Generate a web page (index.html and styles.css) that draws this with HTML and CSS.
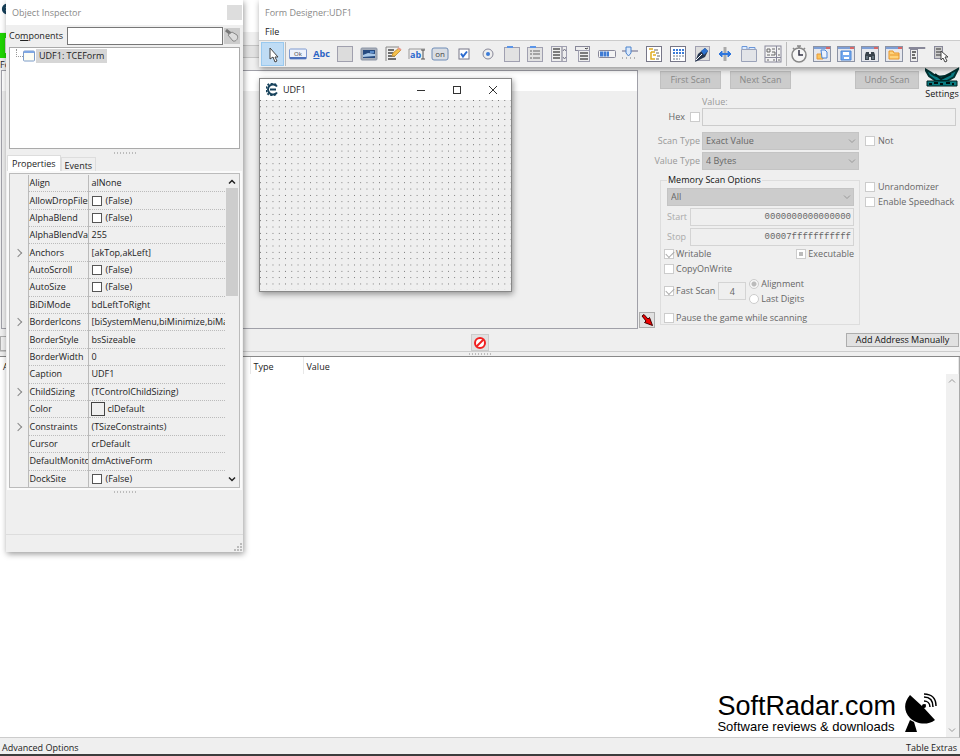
FILE: index.html
```html
<!DOCTYPE html>
<html lang="en">
<head>
    <meta charset="UTF-8">
    <meta name="viewport" content="width=device-width, initial-scale=1.0">
    <title>Form Designer:UDF1</title>
    <link rel="stylesheet" href="styles.css">
</head>
<body>
    <main class="app">
        <div class="app-title">
            <svg width="12" height="12" viewBox="0 0 12 12"><path d="M10 3A4 4 0 1 0 10 9M3 6h6" fill="none" stroke="#17425c" stroke-width="3"/></svg>
        </div>
        <div class="process-row">
            <button class="process-button" aria-label="Open process"></button>
            <div class="progress"></div>
        </div>

        <section class="scanner">
            <div class="found">
                <div class="found-label">Found: 0</div>
                <div class="found-list"><div class="found-header"></div></div>
            </div>

            <div class="arrow-column">
                <button class="small-button" aria-label="Copy to address list">
                    <svg width="12" height="12" viewBox="0 0 12 12"><path d="M1 2l2-1.500L7 5l1.500-1.500L11.500 11.500 3.500 8.500 5 7z" fill="#f00000" stroke="#400" stroke-width="1"/></svg>
                </button>
            </div>

            <form class="scan-form">
                <div class="scan-top">
                    <div>
                        <div class="scan-buttons">
                            <button type="button" disabled>First Scan</button>
                            <button type="button" disabled>Next Scan</button>
                            <button type="button" class="undo" disabled>Undo Scan</button>
                        </div>
                        <label class="value-label" for="scan-value">Value:</label>
                    </div>
                    <button type="button" class="settings">
                        <svg width="34" height="24" viewBox="0 0 34 24"><path d="M0 6l5 3c5 5 13 6 19 2l9-5-4 8-7 4H11l-7-5z" fill="#087d85" stroke="#033" stroke-width="2"/><path d="M10 11l6 5 10-5" fill="none" stroke="#022" stroke-width="2"/><path d="M2 18h30v5H2z" fill="#0a7c82" stroke="#022"/><path d="M4 21h3m2-1h4m2 1h3m3-1h4m2 1h2" stroke="#011" stroke-width="2"/></svg>
                        Settings
                    </button>
                </div>

                <div class="hex-row">
                    <label class="check hex">Hex <input type="checkbox" disabled></label>
                    <input type="text" id="scan-value" disabled>
                </div>

                <div class="scan-grid">
                    <label for="scan-type">Scan Type</label>
                    <div class="select">
                        <select id="scan-type" disabled><option>Exact Value</option></select>
                        <svg class="chevron" viewBox="0 0 8 8"><path d="M1 2.500l3 3 3-3" fill="none" stroke="currentColor"/></svg>
                    </div>
                    <label class="check"><input type="checkbox" disabled>Not</label>
                    <label for="value-type">Value Type</label>
                    <div class="select">
                        <select id="value-type" disabled><option>4 Bytes</option></select>
                        <svg class="chevron" viewBox="0 0 8 8"><path d="M1 2.500l3 3 3-3" fill="none" stroke="currentColor"/></svg>
                    </div>
                </div>

                <div class="options-row">
                    <fieldset class="memory">
                        <legend>Memory Scan Options</legend>
                        <div class="select">
                            <select aria-label="Memory region" disabled><option>All</option></select>
                            <svg class="chevron" viewBox="0 0 8 8"><path d="M1 2.500l3 3 3-3" fill="none" stroke="currentColor"/></svg>
                        </div>
                        <div class="range">
                            <label for="start">Start</label>
                            <input type="text" id="start" value="0000000000000000" disabled>
                            <label for="stop">Stop</label>
                            <input type="text" id="stop" value="00007fffffffffff" disabled>
                        </div>
                        <div class="flags">
                            <label class="check"><input type="checkbox" checked disabled>Writable</label>
                            <label class="check"><input type="checkbox" class="mixed" disabled>Executable</label>
                        </div>
                        <label class="check"><input type="checkbox" disabled>CopyOnWrite</label>
                        <div class="fast">
                            <label class="check"><input type="checkbox" checked disabled>Fast Scan</label>
                            <input type="text" aria-label="Alignment size" value="4" disabled>
                            <div>
                                <label class="check"><input type="radio" name="align" checked disabled>Alignment</label>
                                <label class="check"><input type="radio" name="align" disabled>Last Digits</label>
                            </div>
                        </div>
                        <label class="check pause"><input type="checkbox" disabled>Pause the game while scanning</label>
                    </fieldset>
                    <div class="extras">
                        <label class="check"><input type="checkbox" disabled>Unrandomizer</label>
                        <label class="check"><input type="checkbox" disabled>Enable Speedhack</label>
                    </div>
                </div>
            </form>
        </section>

        <div class="middle-bar">
            <button class="memory-view" aria-label="Memory View"></button>
            <button class="small-button stop" aria-label="Clear list">
                <svg width="14" height="14" viewBox="0 0 14 14"><circle cx="7" cy="7" r="5" fill="#fff" stroke="#f02020" stroke-width="2"/><path d="M10.500 3.500l-7 7" stroke="#f02020" stroke-width="2"/></svg>
            </button>
            <button class="add-address">Add Address Manually</button>
        </div>
        <div class="splitter"><span class="grip"></span></div>

        <section class="address-list">
            <table>
                <thead>
                    <tr><th class="c-active">Active</th><th class="c-desc">Description</th><th class="c-addr">Address</th><th class="c-type">Type</th><th>Value</th></tr>
                </thead>
            </table>
            <div class="list-scroll">
                <svg viewBox="0 0 8 8"><path d="M1 5.500l3-3 3 3" fill="none" stroke="currentColor"/></svg>
                <svg viewBox="0 0 8 8"><path d="M1 2.500l3 3 3-3" fill="none" stroke="currentColor"/></svg>
            </div>
        </section>

        <footer class="app-footer">
            <span>Advanced Options</span>
            <span>Table Extras</span>
        </footer>
    </main>

    <section class="window designer">
        <div class="title">Form Designer:UDF1</div>
        <div class="menu">File</div>
        <div class="toolbar">
            <button class="selected" aria-label="Select"><svg viewBox="0 0 18 18"><path d="M6 3v11l3-2 2 5 2-1-2-4h3z" fill="#fff" stroke="#444"/></svg></button>
            <div class="tools">
                <button aria-label="Button"><svg viewBox="0 0 18 18"><rect x="0.500" y="4" width="17" height="10" rx="1" fill="#eef2fb" stroke="#7f9ad0"/><path d="M1 13h16" stroke="#4c70bb" stroke-width="2"/><text x="9" y="11" font-size="6" text-anchor="middle" fill="#444">Ok</text></svg></button>
                <button class="abc" aria-label="Label"><u>A</u>bc</button>
                <button aria-label="Panel"><svg viewBox="0 0 18 18"><rect x="1.500" y="1.500" width="15" height="15" fill="#dcdcdc" stroke="#a0a0ae"/></svg></button>
                <button aria-label="Image"><svg viewBox="0 0 18 18"><rect x="1" y="3" width="16" height="12" rx="1" fill="#a5acb8" stroke="#8d96a6"/><rect x="3" y="5" width="12" height="8" fill="#264a80"/><path d="M3 10l5-2 7 1v2l-12 1z" fill="#a9c8e8"/><path d="M10 6h4v2h-4z" fill="#5b8cca"/></svg></button>
                <button aria-label="Memo"><svg viewBox="0 0 18 18"><path d="M2 16V2h13" fill="none" stroke="#888"/><path d="M4 5h6M4 8h5M4 11h7M4 14h8" stroke="#444" stroke-width="1.500"/><path d="M8 11l1-3 6-5 2 2-6 6z" fill="#f5c14b" stroke="#c8983c"/><path d="M14 3l3 2" stroke="#e89a8c" stroke-width="2"/></svg></button>
                <button aria-label="Edit"><svg viewBox="0 0 18 18"><path d="M1 14V4h16" fill="none" stroke="#999"/><text x="2" y="13" font-size="9" font-weight="700" fill="#2b6bd0">ab</text><path d="M13 5h4M15 5v9M13 14h4" stroke="#555"/></svg></button>
                <button aria-label="Toggle"><svg viewBox="0 0 18 18"><rect x="1" y="3" width="16" height="12" rx="2" fill="#d9dde3" stroke="#6e8cb6"/><text x="9" y="12" font-size="8" text-anchor="middle" fill="#444">on</text></svg></button>
                <button aria-label="Check box"><svg viewBox="0 0 18 18"><rect x="4" y="4" width="10" height="10" fill="#fff" stroke="#778"/><path d="M6 8.500l2 3 4-5" fill="none" stroke="#2b6bd0" stroke-width="2"/></svg></button>
                <button aria-label="Radio button"><svg viewBox="0 0 18 18"><circle cx="9" cy="9" r="5" fill="#eee" stroke="#889"/><circle cx="9" cy="9" r="2" fill="#3a7bd8"/></svg></button>
                <button aria-label="Group box"><svg viewBox="0 0 18 18"><rect x="1.500" y="2.500" width="15" height="14" fill="#e2e2e2" stroke="#a0a0b0"/><path d="M4 2h6" stroke="#5b95e8" stroke-width="2"/></svg></button>
                <button aria-label="Radio group"><svg viewBox="0 0 18 18"><rect x="1.500" y="2.500" width="15" height="14" fill="#e2e2e2" stroke="#a0a0b0"/><path d="M4 2h6" stroke="#5b95e8" stroke-width="2"/><path d="M4 6h2M7 6h7M4 9h2M7 9h7M4 13h2M7 13h7" stroke="#666"/></svg></button>
                <button aria-label="List box"><svg viewBox="0 0 18 18"><rect x="1.500" y="1.500" width="15" height="15" fill="#eee" stroke="#a0a0b0"/><path d="M3 4h7M3 7h7M3 10h7M3 13h7" stroke="#555" stroke-width="1.500"/><path d="M12 2v14M13 6l1.500-2L16 6M13 12l1.500 2 1.500-2" fill="none" stroke="#778"/></svg></button>
                <button aria-label="Combo box"><svg viewBox="0 0 18 18"><rect x="1.500" y="1.500" width="14" height="4" fill="#eee" stroke="#889"/><path d="M11 3l1 1 2-1" fill="none" stroke="#444"/><rect x="4.500" y="5.500" width="11" height="11" fill="#eee" stroke="#a0a0b0"/><path d="M6 8h8M6 11h8M6 14h8" stroke="#555" stroke-width="1.500"/></svg></button>
                <button aria-label="Progress bar"><svg viewBox="0 0 18 18"><rect x="0.500" y="5.500" width="17" height="7" rx="1" fill="#f4f4f4" stroke="#889"/><path d="M2 9h9" stroke="#3f7bd4" stroke-width="5" stroke-dasharray="3 .5"/></svg></button>
                <button aria-label="Track bar"><svg viewBox="0 0 18 18"><path d="M1 6h16" stroke="#aab" stroke-width="2"/><path d="M5 2h5v6l-2.500 3L5 8z" fill="#d9e8fb" stroke="#4b82cc"/><path d="M1 13h16" stroke="#777" stroke-dasharray="1 3"/></svg></button>
                <button aria-label="Tree view"><svg viewBox="0 0 18 18"><rect x="1.500" y="1.500" width="15" height="15" fill="#fff" stroke="#778"/><path d="M4 4h4M6 7h4M8 10h3M6 7v7h4" stroke="#e0ad22" stroke-width="1.500" fill="none"/><path d="M9 5h4M11 8h3M12 11h3M11 14h3" stroke="#666"/></svg></button>
                <button aria-label="List view"><svg viewBox="0 0 18 18"><rect x="1.500" y="1.500" width="15" height="15" fill="#fff" stroke="#778"/><path d="M4 5h11M4 8h11" stroke="#3a7bd8" stroke-width="2" stroke-dasharray="2 1"/><path d="M4 11h11M4 14h7" stroke="#678" stroke-dasharray="2 1"/></svg></button>
                <button aria-label="Paint box"><svg viewBox="0 0 18 18"><rect x="2.500" y="1.500" width="14" height="14" fill="#ddd" stroke="#a0a0b0"/><path d="M2 17l3-8 7-6 3 3-3 6-6 3z" fill="#26364f"/><path d="M8 6l4-3 3 3-4 4z" fill="#2c71cf"/><path d="M3 15l6-6" stroke="#fff"/></svg></button>
                <button aria-label="Splitter"><svg viewBox="0 0 18 18"><path d="M9 2v14" stroke="#aaa" stroke-width="3"/><path d="M3 9h12" stroke="#2f76dd" stroke-width="2"/><path d="M6 6L3 9l3 3zM12 6l3 3-3 3z" fill="#2f76dd" stroke="#2f76dd"/></svg></button>
                <button aria-label="Page control"><svg viewBox="0 0 18 18"><path d="M1.500 4.500h15v12h-15z" fill="#e2e4e8" stroke="#9aa2b8"/><path d="M2 4V1.500h5V4M9 4V2.500h6V4" fill="#dcebff" stroke="#6b96d8"/></svg></button>
                <button aria-label="Scroll box"><svg viewBox="0 0 18 18"><rect x="1" y="1" width="16" height="16" fill="#f3f3f3" stroke="#889"/><path d="M12.500 1v16M1 12.500h16" stroke="#889"/><path d="M3 4h3v3H3zM8 4h3M8 7h3v3H7M3 10h3M14 4h2M14 10h2M3 15h2M9 15h2M14 15h2" fill="none" stroke="#666"/></svg></button>
            </div>
            <div class="tools tools-dialogs">
                <button aria-label="Timer"><svg viewBox="0 0 18 18"><path d="M7 1h4M9 1v2M3 3l2 2M15 3l-2 2" stroke="#888" stroke-width="1.500"/><circle cx="9" cy="10" r="7" fill="#f6f6f6" stroke="#888" stroke-width="1.500"/><path d="M9 5v5h4" fill="none" stroke="#334" stroke-width="1.500"/></svg></button>
                <button aria-label="Open dialog"><svg viewBox="0 0 18 18"><rect x="0.500" y="1.500" width="17" height="15" fill="#e6e8ee" stroke="#8c93a4"/><path d="M1 3h12" stroke="#7e9fd6" stroke-width="2"/><path d="M13 3h4" stroke="#d86868" stroke-width="2"/><path d="M4 9h6v5H4z" fill="#fbc55e" stroke="#e89a3a"/><path d="M8 5h4l2 2v6H9z" fill="#e9f1ff" stroke="#4a83d4"/></svg></button>
                <button aria-label="Save dialog"><svg viewBox="0 0 18 18"><rect x="0.500" y="1.500" width="17" height="15" fill="#e6e8ee" stroke="#8c93a4"/><path d="M1 3h12" stroke="#7e9fd6" stroke-width="2"/><path d="M13 3h4" stroke="#d86868" stroke-width="2"/><path d="M4 6h10v9H4z" fill="#75aaf0" stroke="#4c86d4"/><path d="M6 7h6v3H6zM7 12h5v2H7z" fill="#fff"/></svg></button>
                <button aria-label="Find dialog"><svg viewBox="0 0 18 18"><rect x="0.500" y="1.500" width="17" height="15" fill="#e6e8ee" stroke="#8c93a4"/><path d="M1 3h12" stroke="#7e9fd6" stroke-width="2"/><path d="M13 3h4" stroke="#d86868" stroke-width="2"/><path d="M5 7h3v2h2V7h3l1 3v5h-4v-3H8v3H4v-5z" fill="#39434d"/><path d="M6 11v3M12 11v3" stroke="#8fa0ae"/></svg></button>
                <button aria-label="Folder dialog"><svg viewBox="0 0 18 18"><rect x="0.500" y="1.500" width="17" height="15" fill="#e6e8ee" stroke="#8c93a4"/><path d="M1 3h12" stroke="#7e9fd6" stroke-width="2"/><path d="M13 3h4" stroke="#d86868" stroke-width="2"/><path d="M4 14V6h4l1 2h5v6z" fill="#ffd37a" stroke="#e8952a"/><path d="M5 10h9" stroke="#e8952a"/></svg></button>
                <button aria-label="Main menu"><svg viewBox="0 0 18 18"><path d="M1 2.500h16v1H1z" fill="#ccc" stroke="#889"/><rect x="2.500" y="4.500" width="7" height="12" fill="#eee" stroke="#889"/><path d="M4 7h4M4 10h3M4 13h4" stroke="#444" stroke-width="1.500"/></svg></button>
                <button aria-label="Popup menu"><svg viewBox="0 0 18 18"><rect x="2.500" y="1.500" width="8" height="12" fill="#ccc" stroke="#889"/><path d="M4 4h5M4 7h5M4 10h5" stroke="#666" stroke-width="1.500"/><path d="M9 6v9l2-2 2 4 2-1-2-4h3z" fill="#fff" stroke="#444"/></svg></button>
            </div>
        </div>
    </section>

    <section class="window form-window">
        <div class="form-title">
            <svg width="13" height="13" viewBox="0 0 13 13"><path d="M11 3.500A5 5 0 1 0 11 9.500" fill="none" stroke="#17425c" stroke-width="2"/><path d="M10 2A6 6 0 1 0 10 11" fill="none" stroke="#17425c" stroke-width="2" stroke-dasharray="2 1.500"/><path d="M4 6.500h6" stroke="#17425c" stroke-width="2"/></svg>
            <span>UDF1</span>
            <button aria-label="Minimize"><svg viewBox="0 0 10 10"><path d="M1 5.500h8" stroke="#333"/></svg></button>
            <button aria-label="Maximize"><svg viewBox="0 0 10 10"><rect x="1.500" y="1.500" width="7" height="7" fill="none" stroke="#333"/></svg></button>
            <button aria-label="Close"><svg viewBox="0 0 10 10"><path d="M1 1l8 8M9 1l-8 8" stroke="#333"/></svg></button>
        </div>
        <div class="form-canvas"></div>
    </section>

    <section class="window inspector">
        <div class="title">Object Inspector<button aria-label="Close"></button></div>
        <div class="components">
            <label for="filter">Co<u>m</u>ponents</label>
            <input type="text" id="filter">
            <button aria-label="Clear filter"><svg width="14" height="14" viewBox="0 0 14 14"><path d="M1 1l5 4" stroke="#777" stroke-width="3"/><path d="M3 6l4-3 5 3c2 3-1 7-4 6z" fill="#ddd" stroke="#888"/></svg></button>
        </div>
        <div class="tree">
            <span class="tree-line"></span>
            <svg width="12" height="12" viewBox="0 0 12 12"><rect x="0.500" y="1" width="11" height="10" rx="1" fill="#fdfdf4" stroke="#7c9cc9"/><path d="M1 2h10" stroke="#7fa7e4" stroke-width="2"/></svg>
            <span class="tree-item">UDF1: TCEForm</span>
        </div>
        <span class="grip"></span>
        <div class="tabs">
            <button class="active">Properties</button>
            <button>Events</button>
        </div>
        <div class="properties">
            <table>
                <tbody>
                    <tr><td></td><td>Align</td><td>alNone</td></tr>
                    <tr><td></td><td>AllowDropFiles</td><td><label><input type="checkbox">(False)</label></td></tr>
                    <tr><td></td><td>AlphaBlend</td><td><label><input type="checkbox">(False)</label></td></tr>
                    <tr><td></td><td>AlphaBlendValue</td><td>255</td></tr>
                    <tr class="expandable"><td></td><td>Anchors</td><td>[akTop,akLeft]</td></tr>
                    <tr><td></td><td>AutoScroll</td><td><label><input type="checkbox">(False)</label></td></tr>
                    <tr><td></td><td>AutoSize</td><td><label><input type="checkbox">(False)</label></td></tr>
                    <tr><td></td><td>BiDiMode</td><td>bdLeftToRight</td></tr>
                    <tr class="expandable"><td></td><td>BorderIcons</td><td>[biSystemMenu,biMinimize,biMaximize]</td></tr>
                    <tr><td></td><td>BorderStyle</td><td>bsSizeable</td></tr>
                    <tr><td></td><td>BorderWidth</td><td>0</td></tr>
                    <tr><td></td><td>Caption</td><td>UDF1</td></tr>
                    <tr class="expandable"><td></td><td>ChildSizing</td><td>(TControlChildSizing)</td></tr>
                    <tr><td></td><td>Color</td><td><span class="swatch"></span>clDefault</td></tr>
                    <tr class="expandable"><td></td><td>Constraints</td><td>(TSizeConstraints)</td></tr>
                    <tr><td></td><td>Cursor</td><td>crDefault</td></tr>
                    <tr><td></td><td>DefaultMonitor</td><td>dmActiveForm</td></tr>
                    <tr><td></td><td>DockSite</td><td><label><input type="checkbox">(False)</label></td></tr>
                </tbody>
            </table>
            <div class="prop-scroll">
                <svg viewBox="0 0 8 8"><path d="M1 5.500l3-3 3 3" fill="none" stroke="currentColor" stroke-width="1.500"/></svg>
                <div class="thumb"></div>
                <svg viewBox="0 0 8 8"><path d="M1 2.500l3 3 3-3" fill="none" stroke="currentColor" stroke-width="1.500"/></svg>
            </div>
        </div>
        <span class="grip"></span>
        <div class="hint"></div>
        <div class="status"><svg width="8" height="8" viewBox="0 0 8 8"><path d="M6 0h2v2H6zM3 3h2v2H3zM6 3h2v2H6zM0 6h2v2H0zM3 6h2v2H3zM6 6h2v2H6z" fill="#bbb"/></svg></div>
    </section>

    <div class="watermark">
        <div>
            <div class="brand">SoftRadar.com</div>
            <div class="tagline">Software reviews &amp; downloads</div>
        </div>
        <svg width="34" height="42" viewBox="0 0 34 42"><path d="M6 3C-1 11 0 20 6 26s17 8 25 2L20 16l2-4-4 2z"/><path d="M6 28l4 2 3 10H1z"/><circle cx="20" cy="14" r="2"/><path d="M20 9c3 0 6 2 6 6M20 5c6 0 9 4 9 10M20 2c8 0 12 5 12 12" fill="none" stroke="#000" stroke-width="1.500"/></svg>
    </div>
</body>
</html>
```

FILE: styles.css
```css
* {
    box-sizing: border-box;
}

body {
    margin: 0;
    font-family: "Open Sans", "Noto Sans", sans-serif;
    font-size: 9px;
    line-height: 14px;
    color: #222;
    background: #efefef;
    overflow: hidden;
}

button,
input,
select {
    font: inherit;
    color: inherit;
    margin: 0;
    padding: 0;
    border: none;
    border-radius: 0;
    background: none;
}

button {
    display: flex;
    align-items: center;
    justify-content: center;
}

svg {
    display: block;
    flex: none;
}

/* main window */
.app {
    display: flex;
    flex-direction: column;
    height: 100vh;
    border-bottom: 2px solid #3c3c3c;
}

.app-title {
    height: 32px;
    padding-top: 3px;
    background: #fff;
}

.process-row {
    display: flex;
    align-items: flex-end;
    height: 28px;
    padding-bottom: 2px;
}

.process-button {
    width: 30px;
    height: 25px;
    border: 5px solid #1fd400;
    background: #ddd;
}

.progress {
    flex: 1;
    height: 13px;
    margin-left: 8px;
    background: #e2e2e2;
    border: 1px solid #c4c4c4;
}

.scanner {
    display: grid;
    grid-template-columns: 1fr 18px 304px;
    height: 269px;
}

.found {
    display: flex;
    flex-direction: column;
}

.found-label {
    height: 10px;
    line-height: 10px;
}

.found-list {
    flex: 1;
    margin-left: 1px;
    border: 1px solid #a0a0a8;
}

.found-header {
    height: 20px;
    background: #fff;
}

.arrow-column {
    display: flex;
    align-items: flex-end;
    padding: 0 0 1px 1px;
}

.small-button {
    width: 16px;
    height: 16px;
    border: 1px solid #adadad;
    background: #e1e1e1;
}

.scan-form {
    display: flex;
    flex-direction: column;
    padding-left: 4px;
    color: #666;
}

.scan-top {
    display: flex;
    justify-content: space-between;
    height: 48px;
    padding-right: 1px;
}

.scan-buttons {
    display: flex;
    gap: 9px;
    padding-top: 11px;
}

.scan-buttons button {
    width: 61px;
    height: 18px;
    color: #888;
    background: #ccc;
    border: 1px solid #c0c0c0;
}

.scan-buttons .undo {
    width: 64px;
    margin-left: 55px;
}

.value-label {
    display: block;
    margin-left: 42px;
    line-height: 26px;
    color: #999;
}

.settings {
    flex-direction: column;
    justify-content: flex-end;
    padding-bottom: 7px;
    color: #111;
}

.hex-row {
    display: flex;
    justify-content: space-between;
    padding-right: 4px;
}

.hex-row input[type="text"] {
    width: 254px;
    height: 18px;
    border: 1px solid #ccc;
}

.check {
    display: flex;
    align-items: center;
    gap: 3px;
    height: 15px;
    white-space: nowrap;
}

.check.hex {
    width: 36px;
    height: 18px;
    margin-left: 4px;
    gap: 5px;
    justify-content: flex-end;
}

input[type="checkbox"],
input[type="radio"] {
    appearance: none;
    flex: none;
    width: 10px;
    height: 10px;
    background: #fff;
    border: 1px solid #ccc;
}

input[type="radio"] {
    border-radius: 50%;
}

input[type="radio"]:checked {
    background: radial-gradient(circle, #bbb 2px, #f6f6f6 3px);
}

input[type="checkbox"]:checked::before {
    content: "";
    display: block;
    width: 7px;
    height: 4px;
    margin: 1px 0 0 1px;
    border: solid #aaa;
    border-width: 0 0 1px 1px;
    transform: rotate(-45deg);
}

input.mixed {
    background: #bbb;
    box-shadow: inset 0 0 0 2px #fff;
}

.scan-grid {
    display: grid;
    grid-template-columns: 40px 157px 1fr;
    column-gap: 2px;
    row-gap: 2px;
    margin-top: 6px;
    align-items: center;
}

.scan-grid > .check {
    padding-left: 4px;
}

.scan-grid > label:not(.check) {
    justify-self: end;
    white-space: nowrap;
    color: #999;
}

.select {
    position: relative;
}

.select select {
    appearance: none;
    display: block;
    width: 100%;
    height: 18px;
    padding-left: 3px;
    color: #666;
    opacity: 1;
    background: #ccc;
    border: 1px solid #c4c4c4;
}

.chevron {
    position: absolute;
    right: 3px;
    top: 5px;
    width: 8px;
    height: 8px;
    color: #999;
}

.options-row {
    display: flex;
    gap: 5px;
    margin-top: 3px;
}

.memory {
    flex: none;
    width: 200px;
    height: 152px;
    margin: 0;
    padding: 1px 5px 0 3px;
    border: 1px solid #ddd;
}

.memory .check {
    gap: 2px;
}

.memory legend {
    margin-left: 3px;
    padding: 0 1px;
    color: #111;
}

.memory > .select {
    margin-left: 3px;
}

.range {
    display: grid;
    grid-template-columns: 23px 1fr;
    row-gap: 2px;
    margin: 2px 0 0 3px;
    align-items: center;
    color: #aaa;
}

.range input {
    min-width: 0;
    height: 18px;
    padding-right: 2px;
    text-align: right;
    font-family: "Liberation Mono", monospace;
    color: #666;
    border: 1px solid #d4d4d4;
}

.flags {
    display: flex;
    justify-content: space-between;
}

.fast {
    display: flex;
    align-items: center;
    gap: 3px;
}

.fast input[type="text"] {
    width: 28px;
    height: 18px;
    text-align: center;
    border: 1px solid #d4d4d4;
}

.pause {
    margin-top: 4px;
}

.extras {
    padding-top: 6px;
}

.middle-bar {
    display: grid;
    grid-template-columns: 1fr auto 1fr;
    align-items: end;
    height: 22px;
}

.memory-view {
    width: 60px;
    height: 15px;
    border: 1px solid #adadad;
}

.stop {
    width: 18px;
    height: 17px;
    border-color: #ccc;
}

.add-address {
    justify-self: end;
    align-self: center;
    width: 113px;
    height: 14px;
    margin-right: 1px;
    color: #111;
    border: 1px solid #adadad;
    background: #e1e1e1;
}

.splitter {
    height: 6px;
    border-top: 1px solid #ccc;
    border-bottom: 1px solid #888;
}

.grip {
    display: block;
    width: 22px;
    height: 2px;
    margin: 1px auto;
    background: repeating-linear-gradient(90deg, #bbb 0 1px, transparent 1px 3px);
}

.address-list {
    flex: 1;
    display: flex;
    flex-direction: column;
    background: #fff;
    border-right: 1px solid #aaa;
    border-bottom: 1px solid #ccc;
}

.address-list table {
    width: 100%;
    table-layout: fixed;
    border-collapse: collapse;
}

.address-list th {
    height: 17px;
    padding: 3px 0 0 3px;
    font-weight: 400;
    text-align: left;
    border-right: 1px solid #e8e8e8;
}

.c-active { width: 60px; }
.c-desc { width: 110px; }
.c-addr { width: 80px; }
.c-type { width: 53px; }

.list-scroll {
    flex: 1;
    align-self: flex-end;
    display: flex;
    flex-direction: column;
    justify-content: space-between;
    width: 13px;
    padding: 3px 2px;
    color: #999;
    background: #f0f0f0;
}

.list-scroll svg {
    width: 8px;
    height: 8px;
}

.app-footer {
    display: flex;
    justify-content: space-between;
    height: 16px;
    padding: 3px 3px 0 2px;
}

/* floating windows */
.window {
    position: absolute;
    background: #efefef;
    box-shadow: 1px 2px 6px rgba(0, 0, 0, 0.4);
}

.title {
    display: flex;
    align-items: center;
    justify-content: space-between;
    height: 25px;
    padding-left: 6px;
    color: #888;
    background: #fff;
}

.designer {
    top: 0;
    left: 259px;
    right: 0;
    height: 67px;
}

.menu {
    height: 15px;
    padding-left: 6px;
    background: #fff;
}

.toolbar {
    display: flex;
    height: 27px;
    padding: 1px 7px 1px 2px;
    border-top: 1px solid #ccc;
}

.toolbar .selected {
    width: 23px;
    background: #bfdcf5;
    border: 1px solid #99c9ef;
}

.toolbar svg {
    width: 18px;
    height: 18px;
}

.tools {
    display: flex;
    flex: 21;
    margin-left: 1px;
    border-left: 1px solid #bbb;
}

.tools-dialogs {
    flex: 7;
}

.tools button {
    flex: 1;
    min-width: 0;
}

.tools .abc {
    font-weight: 700;
    color: #2b62c4;
}

.form-window {
    top: 78px;
    left: 259px;
    width: 253px;
    height: 214px;
    border: 1px solid #888;
}

.form-title {
    display: flex;
    align-items: center;
    height: 21px;
    padding-left: 6px;
    background: #fff;
}

.form-title span {
    flex: 1;
    margin-left: 4px;
}

.form-title button {
    width: 36px;
    height: 20px;
}

.form-title button svg {
    width: 10px;
    height: 10px;
}

/* design grid: vertical lines cut into dots by horizontal bands */
.form-canvas {
    height: 190px;
    background-image:
        linear-gradient(transparent 1px, #efefef 1px),
        linear-gradient(90deg, #666 1px, #efefef 1px);
    background-size: calc(100% / 40) calc(100% / 30);
}

/* object inspector */
.inspector {
    top: 0;
    left: 6px;
    width: 237px;
    height: 552px;
    display: flex;
    flex-direction: column;
}

.inspector .title button {
    width: 15px;
    height: 15px;
    margin-right: 1px;
    background: #ddd;
}

.components {
    display: flex;
    align-items: center;
    height: 22px;
    padding: 0 3px;
}

.components input {
    flex: 1;
    min-width: 0;
    height: 18px;
    margin-left: 4px;
    background: #fff;
    border: 1px solid #777;
}

.components button {
    width: 16px;
    height: 16px;
    margin-left: 1px;
    background: #ccc;
}

.tree {
    display: flex;
    height: 102px;
    margin: 0 3px;
    padding: 1px 6px;
    align-items: flex-start;
    background: #fff;
    border: 1px solid #aaa;
}

.tree-line {
    width: 7px;
    height: 8px;
    border-left: 1px dotted #999;
    border-bottom: 1px dotted #999;
}

.tree svg {
    margin-top: 1px;
}

.tree-item {
    margin-left: 1px;
    padding: 0 3px;
    background: #d6d6d6;
}

.inspector .grip {
    margin: 3px auto 1px;
}

.tabs {
    display: flex;
    align-items: flex-end;
    height: 18px;
    margin-left: 1px;
}

.tabs button {
    height: 16px;
    padding: 0 3px;
    border: 1px solid #ddd;
    border-bottom: none;
}

.tabs .active {
    height: 18px;
    padding: 0 4px 2px;
    background: #fff;
}

.properties {
    display: flex;
    height: 315px;
    margin: 0 3px;
    padding: 1px 1px 1px 0;
    border: 1px solid #bbb;
    box-shadow: 0 0 0 2px #fafafa;
}

.properties table {
    flex: 1;
    width: 100%;
    height: 313px;
    table-layout: fixed;
    border-collapse: collapse;
}

.properties td {
    padding: 0 0 0 1px;
    overflow: hidden;
    white-space: nowrap;
    border-bottom: 1px dotted #bbb;
    border-right: 1px solid #bbb;
}

.properties td:first-child {
    width: 18px;
    border-bottom: none;
}

.properties td:nth-child(2) {
    width: 60px;
}

.properties td:last-child {
    padding-left: 3px;
    border-right: none;
}

.expandable td:first-child::before {
    content: "";
    display: block;
    width: 5px;
    height: 5px;
    margin-left: 4px;
    border: solid #888;
    border-width: 1px 1px 0 0;
    transform: rotate(45deg);
}

.properties label {
    display: flex;
    align-items: center;
    gap: 4px;
}

.properties input {
    border-color: #555;
}

.swatch {
    display: inline-block;
    width: 14px;
    height: 14px;
    margin: 0 3px 0 -1px;
    vertical-align: top;
    border: 1px solid #444;
}

.prop-scroll {
    display: flex;
    flex-direction: column;
    align-items: center;
    width: 12px;
    margin-left: 1px;
    padding: 3px 0;
}

.prop-scroll svg {
    width: 8px;
    height: 8px;
}

.thumb {
    width: 12px;
    height: 108px;
    margin: 2px 0 auto;
    background: #cdcdcd;
}

.hint {
    flex: 1;
}

.status {
    display: flex;
    align-items: flex-end;
    justify-content: flex-end;
    height: 18px;
    padding: 1px;
    border-top: 1px solid #ddd;
}

.watermark {
    position: absolute;
    right: 22px;
    bottom: 22px;
    display: flex;
    gap: 8px;
    color: #000;
    font-family: "Liberation Sans", Arial, sans-serif;
}

.brand {
    font-size: 27px;
    line-height: 28px;
}

.tagline {
    font-size: 13px;
    line-height: 14px;
}
```
